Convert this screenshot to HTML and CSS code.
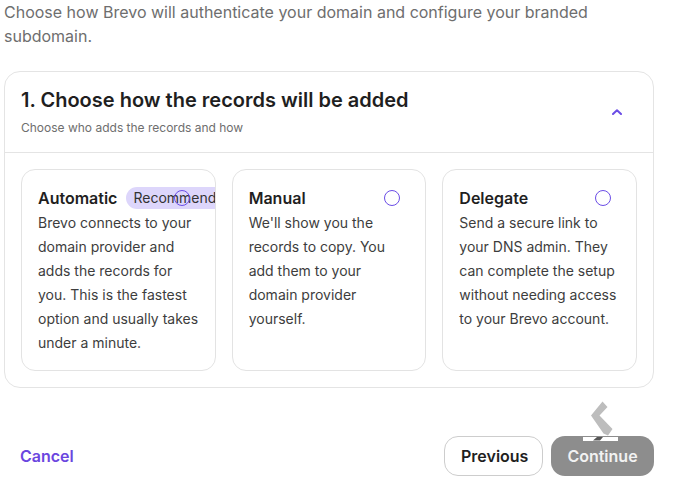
FILE: index.html
```
<!DOCTYPE html>
<html lang="en">
<head>
<meta charset="utf-8">
<title>Domain authentication</title>
<link rel="stylesheet" href="styles.css">
</head>
<body>
<main class="page">
  <p class="intro">Choose how Brevo will authenticate your domain and configure your branded subdomain.</p>

  <section class="panel">
    <header class="panel-head">
      <div class="panel-titles">
        <h2 class="panel-title">1. Choose how the records will be added</h2>
        <p class="panel-sub">Choose who adds the records and how</p>
      </div>
      <button class="collapse" type="button" aria-label="Collapse">
        <svg width="10" height="6" viewBox="0 0 10 6"><path d="M1 5 L5 1.2 L9 5" fill="none" stroke="#6b4de6" stroke-width="2" stroke-linecap="round" stroke-linejoin="round"/></svg>
      </button>
    </header>

    <div class="options">
      <label class="option">
        <div class="option-head">
          <span class="option-title">Automatic</span>
          <span class="badge">Recommended</span>
        </div>
        <p class="option-text">Brevo connects to your domain provider and adds the records for you. This is the fastest option and usually takes under a minute.</p>
        <span class="radio"></span>
      </label>
      <label class="option">
        <div class="option-head">
          <span class="option-title">Manual</span>
        </div>
        <p class="option-text">We'll show you the records to copy. You add them to your domain provider yourself.</p>
        <span class="radio"></span>
      </label>
      <label class="option">
        <div class="option-head">
          <span class="option-title">Delegate</span>
        </div>
        <p class="option-text">Send a secure link to your DNS admin. They can complete the setup without needing access to your Brevo account.</p>
        <span class="radio"></span>
      </label>
    </div>
  </section>

  <footer class="actions">
    <button class="btn-link" type="button">Cancel</button>
    <div class="actions-right">
      <button class="btn btn-secondary" type="button">Previous</button>
      <div class="continue-wrap">
        <button class="btn btn-disabled" type="button">Continue</button>
        <svg class="pointer" width="40" height="41" viewBox="0 0 40 41">
          <polygon points="23.5,1.5 28.5,7 20.5,15.5 33.5,29 29,35.5 24.5,33.5 12,15.5" fill="#bdbdbd"/>
          <rect x="4" y="37" width="35" height="4" fill="#ffffff"/>
          <polygon points="14,40.5 18,37 24,37 21,40.5" fill="#555555"/>
        </svg>
      </div>
    </div>
  </footer>
</main>
</body>
</html>
```

FILE: styles.css
```
* {
  box-sizing: border-box;
}

html, body {
  margin: 0;
  background: #ffffff;
}

body {
  font-family: Inter, "Noto Sans", "Liberation Sans", sans-serif;
  color: #1f1f1f;
}

.page {
  width: 654px;
  padding-left: 4px;
}

.intro {
  margin: 0;
  font-size: 16px;
  line-height: 24px;
  color: #6e6e6e;
  padding-right: 60px;
}

.panel {
  margin-top: 23px;
  border: 1px solid #e4e4e4;
  border-radius: 16px;
}

.panel-head {
  display: flex;
  align-items: center;
  justify-content: space-between;
  padding: 15px 16px 16px 16px;
  border-bottom: 1px solid #e4e4e4;
}

.panel-title {
  margin: 0;
  font-size: 20px;
  line-height: 26px;
  font-weight: 600;
  color: #1f1f1f;
}

.panel-sub {
  margin: 7px 0 0;
  font-size: 12px;
  line-height: 16px;
  color: #6e6e6e;
}

.collapse {
  width: 40px;
  height: 40px;
  border: 0;
  background: transparent;
  padding: 0;
  display: flex;
  align-items: center;
  justify-content: center;
}

.options {
  display: grid;
  grid-template-columns: repeat(3, 1fr);
  gap: 16px;
  padding: 16px;
}

.option {
  position: relative;
  overflow: hidden;
  border: 1px solid #e3e3e3;
  border-radius: 14px;
  padding: 16px 16px 15px;
}

.option-head {
  display: flex;
  align-items: center;
  white-space: nowrap;
  height: 24px;
}

.option-title {
  font-size: 16px;
  line-height: 24px;
  font-weight: 600;
  color: #1f1f1f;
}

.badge {
  margin-left: 9px;
  padding: 0 7px;
  height: 22px;
  line-height: 22px;
  border-radius: 11px;
  background: #ddd6fb;
  font-size: 14px;
  color: #333333;
}

.option-text {
  margin: 1px 0 0;
  font-size: 14px;
  line-height: 24px;
  color: #3d3d3d;
}

.radio {
  position: absolute;
  top: 20px;
  right: 25px;
  width: 16px;
  height: 16px;
  border: 1.5px solid #6b4de6;
  border-radius: 50%;
  background: transparent;
}

.actions {
  margin-top: 48px;
  display: flex;
  align-items: center;
  justify-content: space-between;
}

.btn-link {
  border: 0;
  background: transparent;
  padding: 0 16px;
  font-family: inherit;
  font-size: 16px;
  font-weight: 600;
  color: #6b46e0;
}

.actions-right {
  display: flex;
  gap: 8px;
}

.btn {
  height: 40px;
  padding: 0 16px;
  border-radius: 14px;
  font-family: inherit;
  font-size: 16px;
  font-weight: 600;
}

.btn-secondary {
  background: #ffffff;
  border: 1px solid #cdcdcd;
  color: #1f1f1f;
  width: 99px;
}

.btn-disabled {
  background: #8d8d8d;
  border: 0;
  color: #f2f2f2;
  width: 103px;
}

.continue-wrap {
  position: relative;
}

.pointer {
  position: absolute;
  left: 28px;
  top: -36px;
}
```
